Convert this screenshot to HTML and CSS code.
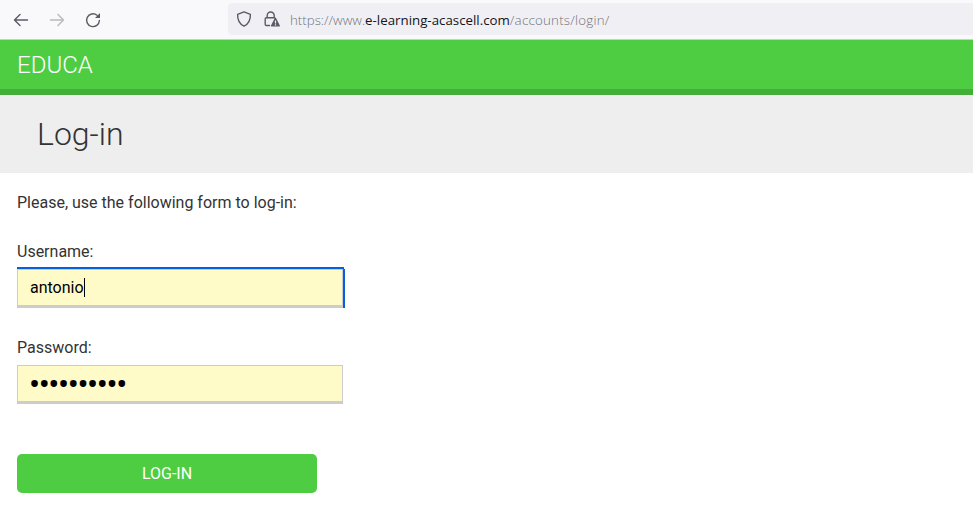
FILE: index.html
```html
<!DOCTYPE html>
<html lang="en">
<head>
<meta charset="utf-8">
<title>Log-in</title>
<link rel="stylesheet" href="styles.css">
</head>
<body>
<div class="toolbar">
  <div class="nav">
    <svg width="16" height="16" viewBox="0 0 16 16"><path d="M14.500 8H2M7 2.500L1.500 8 7 13.500"/></svg>
    <svg class="disabled" width="16" height="16" viewBox="0 0 16 16"><path d="M1.500 8H14M9 2.500L14.500 8 9 13.500"/></svg>
    <svg width="16" height="16" viewBox="0 0 16 16"><path d="M12 3.200A6.400 6.400 0 1 0 14.400 8.500"/><path class="solid" d="M15 1v5h-5z"/></svg>
  </div>
  <div class="urlbar">
    <svg width="16" height="16" viewBox="0 0 16 16"><path d="M8 .9L14.400 3.300C14.600 9 12.700 13 8 15.200 3.300 13 1.400 9 1.600 3.300z"/></svg>
    <svg class="lock" width="16" height="16" viewBox="0 0 16 16"><path d="M3.200 7V4.500a3.500 3.500 0 0 1 7 0V7M10.800 6.800H2.400A1.200 1.200 0 0 0 1.200 8v5.300a1.200 1.200 0 0 0 1.200 1.200H5.500"/><path class="solid" d="M11.400 6.800q.6 0 .9.600l3.500 7q.4 1-.6 1H7.600q-1 0-.6-1l3.500-7q.3-.6.9-.6z"/><path class="mark" d="M11.500 9.500v3M11.500 13.300v1.200"/></svg>
    <div class="url">https://www.<b>e-learning-acascell.com</b><span>/accounts/login/</span></div>
  </div>
</div>
<header class="header">EDUCA</header>
<h1 class="title">Log-in</h1>
<form class="form">
  <p class="intro">Please, use the following form to log-in:</p>
  <label for="username">Username:</label>
  <div class="field focused"><input id="username" type="text" value="antonio"><span class="caret"></span></div>
  <label for="password">Password:</label>
  <div class="field"><input id="password" class="secret" type="password" value="0123456789"></div>
  <button type="button">LOG-IN</button>
</form>
</body>
</html>
```
FILE: styles.css
```css
* { box-sizing: border-box; }
body { margin: 0; background: #fff; color: #333; font: 16px/20px Roboto, sans-serif; }
.toolbar { display: flex; height: 40px; padding: 3px 0 4px 13px; background: #f9f9fb; border-bottom: 1px solid #ccccd0; }
.nav { display: flex; gap: 20px; width: 215px; align-items: center; padding-top: 1px; }
svg { flex: none; fill: none; stroke: #5b5b66; stroke-width: 1.4; stroke-linecap: round; stroke-linejoin: round; }
.disabled { opacity: .4; }
.solid { fill: #5b5b66; stroke: none; }
.mark { stroke: #f0f0f4; stroke-width: 1.2; stroke-linecap: butt; }
.urlbar { display: flex; flex: 1; align-items: center; padding-left: 8px; background: #f0f0f4; border-radius: 4px 0 0 4px; }
.lock { margin-left: 12px; }
.url { margin: 1px 0 0 10px; font: 300 13.3px/20px "Open Sans", sans-serif; color: #73737c; white-space: nowrap; }
.url b { font-weight: 400; color: #15141a; }
.url span { letter-spacing: .23px; }
.header { height: 55px; padding: 10px 17px; background: #4ecd43; border-bottom: 6px solid #43af39; color: #fff; font-size: 24px; font-weight: 300; line-height: 30px; }
.title { height: 78px; margin: 0; padding: 19px 37px; background: #eee; font-size: 32px; font-weight: 300; line-height: 40px; }
.form { padding: 20px 17px; }
.intro { margin: 0 0 29px; }
label { display: block; height: 20px; }
.field { position: relative; width: 326px; height: 39px; margin: 7px 0 29px; }
.focused { margin-bottom: 30px; box-shadow: 2px 0 #0560df, 0 -2px #0560df, 1px -2px #0560df; }
input { display: block; width: 100%; height: 100%; padding: 0 12px; border: 1px solid #ccc; border-bottom-width: 3px; border-radius: 0; outline: 0; background: #fffbc8; color: #000; font: 16px Roboto, sans-serif; }
.secret { padding: 1px 11px 0; font-size: 33px; letter-spacing: -1.45px; }
.caret { position: absolute; left: 67px; top: 9px; width: 1px; height: 19px; background: #000; }
button { display: block; width: 300px; height: 39px; margin-top: 50px; padding: 0; border: 0; border-radius: 5px; background: #4ecd43; color: #fff; font: 16px Roboto, sans-serif; }
```
